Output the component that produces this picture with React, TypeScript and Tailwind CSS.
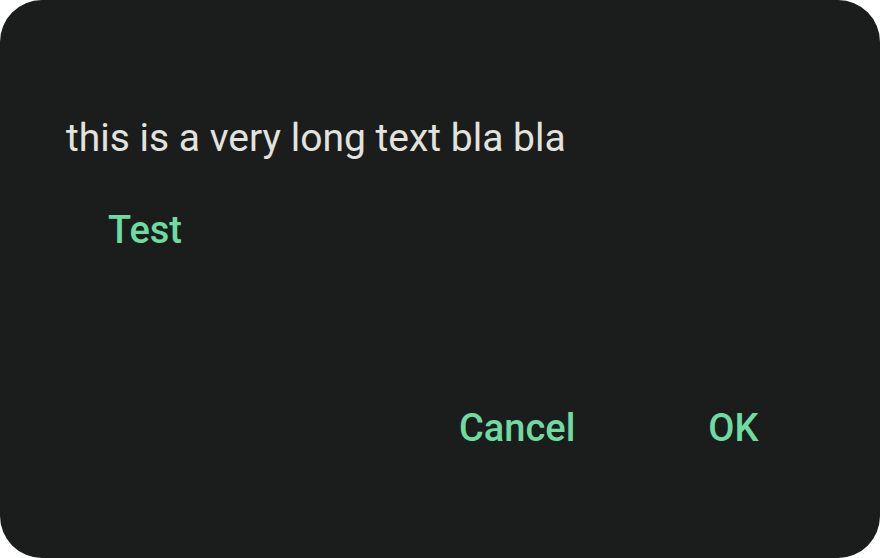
export default function App() {
  return (
    <div className="w-[880px] h-[558px] bg-white">
      <div
        className="w-full h-full rounded-[42px] bg-[#1b1d1c] flex flex-col pl-[66px] pt-[112px]"
        style={{ fontFamily: "Roboto, 'Noto Sans', sans-serif" }}
      >
        <div className="text-[39px] leading-[52px] text-[#e3e3de]">this is a very long text bla bla</div>
        <div className="pl-[42px] mt-[40px] text-[38px] leading-[52px] text-[#6edba0] font-medium">Test</div>
        <div className="flex mt-[146px] pl-[393px] gap-[133px] text-[38px] leading-[52px] text-[#6edba0] font-medium">
          <span>Cancel</span>
          <span>OK</span>
        </div>
      </div>
    </div>
  );
}
